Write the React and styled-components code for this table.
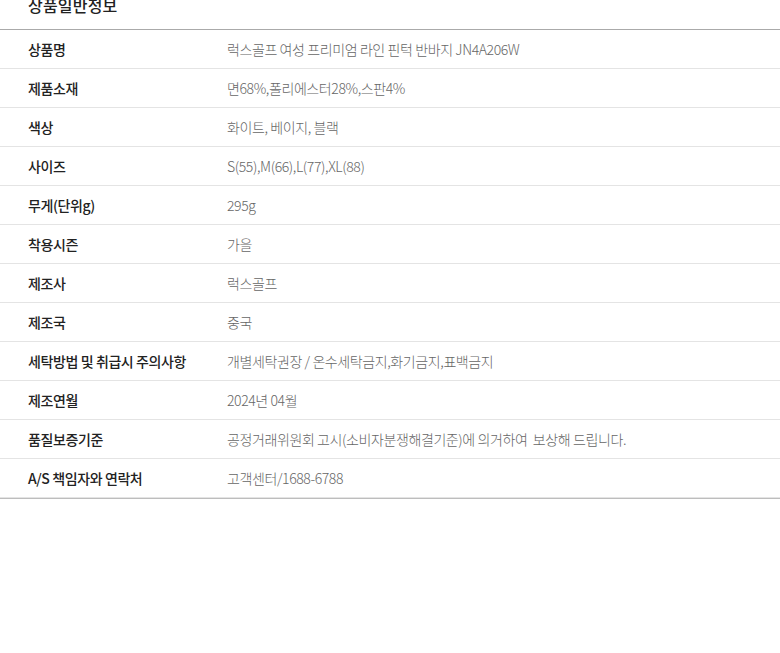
import React from "react";
import styled, { createGlobalStyle } from "styled-components";

const Global = createGlobalStyle`
  html, body { margin: 0; padding: 0; background: #fff; }
  body { font-family: "Noto Sans CJK KR", "Noto Sans", sans-serif; }
`;

const Wrap = styled.section`
  width: 780px;
  overflow: hidden;
`;

const Header = styled.div`
  padding-left: 28px;
  border-bottom: 1px solid #aaaaaa;
  box-sizing: border-box;
  height: 30px;
  display: flex;
  align-items: flex-start;
`;

const Title = styled.h2`
  margin: -6px 0 0;
  font-size: 16px;
  line-height: 22px;
  font-weight: 500;
  color: #222;
  letter-spacing: 0.2px;
`;

const Table = styled.div`
  border-bottom: 1px solid #bdbdbd;
`;

const Row = styled.div`
  display: grid;
  grid-template-columns: 199px 1fr;
  padding-left: 28px;
  height: 39px;
  box-sizing: border-box;
  align-items: center;
  border-bottom: 1px solid #e4e4e4;
`;

const Label = styled.div`
  font-size: 14px;
  font-weight: 500;
  color: #222;
  letter-spacing: -0.4px;
`;

const Value = styled.div`
  font-size: 14px;
  font-weight: 300;
  color: #666;
  letter-spacing: -0.4px;
  white-space: pre;
`;

const rows = [
  ["상품명", "럭스골프 여성 프리미엄 라인 핀턱 반바지 JN4A206W"],
  ["제품소재", "면68%,폴리에스터28%,스판4%"],
  ["색상", "화이트, 베이지, 블랙"],
  ["사이즈", "S(55),M(66),L(77),XL(88)"],
  ["무게(단위g)", "295g"],
  ["착용시즌", "가을"],
  ["제조사", "럭스골프"],
  ["제조국", "중국"],
  ["세탁방법 및 취급시 주의사항", "개별세탁권장 / 온수세탁금지,화기금지,표백금지"],
  ["제조연월", "2024년 04월"],
  ["품질보증기준", "공정거래위원회 고시(소비자분쟁해결기준)에 의거하여  보상해 드립니다."],
  ["A/S 책임자와 연락처", "고객센터/1688-6788"],
];

export default function App() {
  return (
    <Wrap>
      <Global />
      <Header>
        <Title>상품일반정보</Title>
      </Header>
      <Table>
        {rows.map(([k, v]) => (
          <Row key={k}>
            <Label>{k}</Label>
            <Value>{v}</Value>
          </Row>
        ))}
      </Table>
    </Wrap>
  );
}
